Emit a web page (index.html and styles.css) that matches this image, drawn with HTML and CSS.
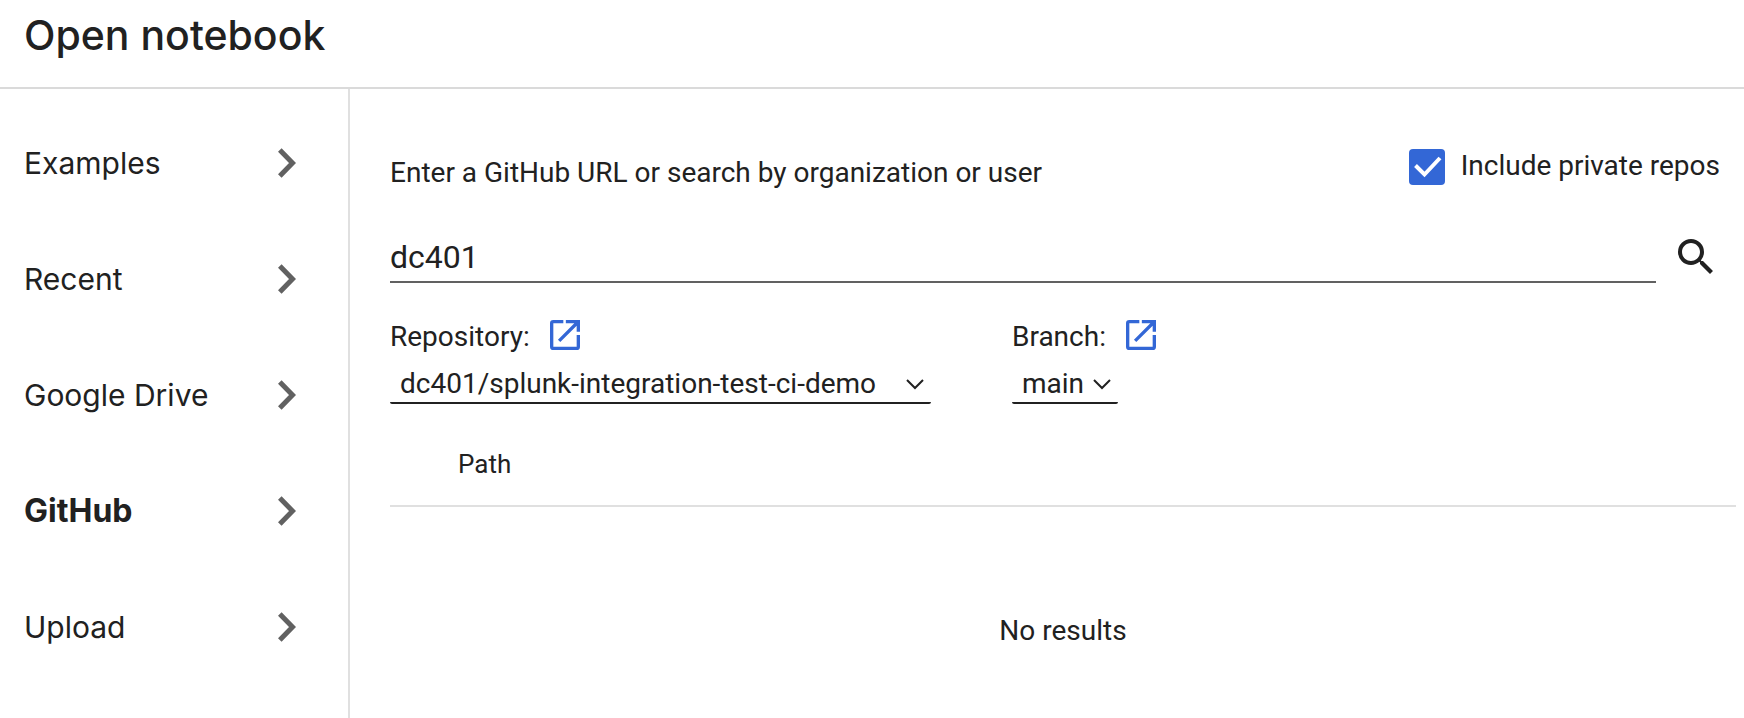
FILE: index.html
```html
<!DOCTYPE html>
<html lang="en">
<head>
<meta charset="utf-8">
<meta name="viewport" content="width=device-width, initial-scale=1">
<title>Open notebook</title>
<link rel="stylesheet" href="styles.css">
</head>
<body>
<svg class="sprite" aria-hidden="true">
  <symbol id="chevron-right" viewBox="0 0 18 30"><path d="M1.800 2l12.700 13L1.800 28" fill="none" stroke="currentColor" stroke-width="5"/></symbol>
  <symbol id="chevron-down" viewBox="0 0 18 12"><path d="M1 2l8 8 8-8" fill="none" stroke="currentColor" stroke-width="2"/></symbol>
  <symbol id="open-in-new" viewBox="0 0 24 24"><path fill="currentColor" d="M19 19H5V5h6V3H5a2 2 0 0 0-2 2v14a2 2 0 0 0 2 2h14a2 2 0 0 0 2-2v-7h-2v7zM12.500 3v2h5.100l-9.830 9.830 1.410 1.410L19 6.410V10h2V3h-8.500z"/></symbol>
</svg>
<div class="dialog">
  <header class="header"><h1 class="title">Open notebook</h1></header>
  <div class="body">
    <nav class="tabs" aria-label="Notebook source">
      <button class="tab" type="button">Examples<svg class="tab-icon"><use href="#chevron-right"/></svg></button>
      <button class="tab" type="button">Recent<svg class="tab-icon"><use href="#chevron-right"/></svg></button>
      <button class="tab" type="button">Google Drive<svg class="tab-icon"><use href="#chevron-right"/></svg></button>
      <button class="tab tab-active" type="button" aria-current="page">GitHub<svg class="tab-icon"><use href="#chevron-right"/></svg></button>
      <button class="tab" type="button">Upload<svg class="tab-icon"><use href="#chevron-right"/></svg></button>
    </nav>
    <main class="panel">
      <div class="intro">
        <label class="prompt" for="query">Enter a GitHub URL or search by organization or user</label>
        <label class="private" for="private">
          <span class="check">
            <input class="check-input" id="private" type="checkbox" checked>
            <svg class="check-mark" viewBox="0 0 36 36"><path d="M6.500 16.500l9 9L31 9" fill="none" stroke="currentColor" stroke-width="4"/></svg>
          </span>
          <span>Include private repos</span>
        </label>
      </div>
      <div class="search">
        <input class="query" id="query" type="text" value="dc401">
        <button class="search-button" type="button" aria-label="Search">
          <svg class="search-icon" viewBox="0 0 24 24"><path fill="currentColor" d="M15.500 14h-.79l-.28-.27A6.471 6.471 0 0 0 16 9.500 6.500 6.500 0 1 0 9.500 16c1.610 0 3.090-.59 4.230-1.570l.27.28v.79l5 4.990L20.490 19l-4.990-5zm-6 0C7.010 14 5 11.990 5 9.500S7.010 5 9.500 5 14 7.010 14 9.500 11.990 14 9.500 14z"/></svg>
        </button>
      </div>
      <div class="filters">
        <div class="field">
          <div class="field-head">
            <label for="repo">Repository:</label>
            <a class="open-link" href="#repo" aria-label="Open repository"><svg class="open-icon"><use href="#open-in-new"/></svg></a>
          </div>
          <div class="picker">
            <select class="select select-repo" id="repo"><option>dc401/splunk-integration-test-ci-demo</option></select>
            <svg class="picker-icon"><use href="#chevron-down"/></svg>
          </div>
        </div>
        <div class="field">
          <div class="field-head">
            <label for="branch">Branch:</label>
            <a class="open-link" href="#branch" aria-label="Open branch"><svg class="open-icon"><use href="#open-in-new"/></svg></a>
          </div>
          <div class="picker">
            <select class="select" id="branch"><option>main</option></select>
            <svg class="picker-icon"><use href="#chevron-down"/></svg>
          </div>
        </div>
      </div>
      <table class="results">
        <thead><tr><th class="results-head" scope="col">Path</th></tr></thead>
        <tbody><tr><td class="results-empty">No results</td></tr></tbody>
      </table>
    </main>
  </div>
</div>
</body>
</html>
```
FILE: styles.css
```css
* {
  box-sizing: border-box;
}

body {
  margin: 0;
  background: #fff;
  color: #212121;
  font: 28px/32px Roboto, sans-serif;
}

button,
input,
select {
  margin: 0;
  border: 0;
  padding: 0;
  border-radius: 0;
  background: none;
  color: inherit;
  font: inherit;
}

.sprite {
  display: none;
}

.dialog {
  display: flex;
  flex-direction: column;
  min-height: 100vh;
}

.header {
  padding: 11px 24px 28px;
  border-bottom: 2px solid #dadada;
}

.title {
  margin: 0;
  font: 500 41px/48px Inter, sans-serif;
}

.body {
  display: flex;
  flex: 1;
}

.tabs {
  display: flex;
  flex: none;
  flex-direction: column;
  width: 350px;
  padding-top: 16px;
  border-right: 2px solid #e0e0e0;
}

.tab {
  display: flex;
  align-items: center;
  justify-content: space-between;
  height: 116px;
  padding: 0 52px 0 24px;
  font: 400 30px/40px Inter, sans-serif;
  text-align: left;
}

.tab-active {
  font-size: 32px;
  font-weight: 700;
}

.tab-icon {
  width: 18px;
  height: 30px;
  color: #616161;
}

.panel {
  flex: 1;
  min-width: 0;
  padding: 60px 8px 0 40px;
}

.intro {
  display: flex;
  justify-content: space-between;
  padding-right: 16px;
}

.prompt {
  padding-top: 8px;
}

.private {
  display: flex;
  gap: 16px;
  line-height: 34px;
}

.check {
  display: grid;
  position: relative;
  width: 36px;
  height: 36px;
}

.check-input {
  appearance: none;
  width: 36px;
  height: 36px;
  border-radius: 4px;
  background: #3367d6;
}

.check-mark {
  position: absolute;
  inset: 0;
  color: #fff;
  pointer-events: none;
}

.search {
  display: flex;
  gap: 16px;
  margin-top: 44px;
  padding-right: 16px;
}

.query {
  flex: 1;
  min-width: 0;
  height: 50px;
  border-bottom: 2px solid #616161;
  font-size: 32px;
  outline: 0;
}

.search-button,
.search-icon {
  display: block;
  width: 48px;
  height: 48px;
}

.filters {
  display: flex;
  gap: 81px;
  margin-top: 32px;
}

.field-head {
  display: flex;
  gap: 15px;
  line-height: 44px;
}

.open-link {
  color: #3367d6;
}

.open-icon {
  display: block;
  width: 40px;
  height: 40px;
}

.picker {
  display: inline-block;
  position: relative;
  margin-top: 5px;
}

.select {
  appearance: none;
  display: block;
  height: 40px;
  padding: 2px 33px 0 10px;
  border-bottom: 2px solid #212121;
  border-radius: 2px;
}

.select-repo {
  padding-right: 54px;
}

.picker-icon {
  position: absolute;
  top: 14px;
  right: 7px;
  width: 18px;
  height: 12px;
  pointer-events: none;
}

.results {
  width: 100%;
  margin-top: 19px;
  border-collapse: collapse;
}

.results-head {
  height: 83px;
  padding: 0 0 0 68px;
  border-bottom: 2px solid #e0e0e0;
  font-size: 26px;
  font-weight: 400;
  text-align: left;
}

.results-empty {
  padding: 108px 0 40px;
  text-align: center;
}
```
